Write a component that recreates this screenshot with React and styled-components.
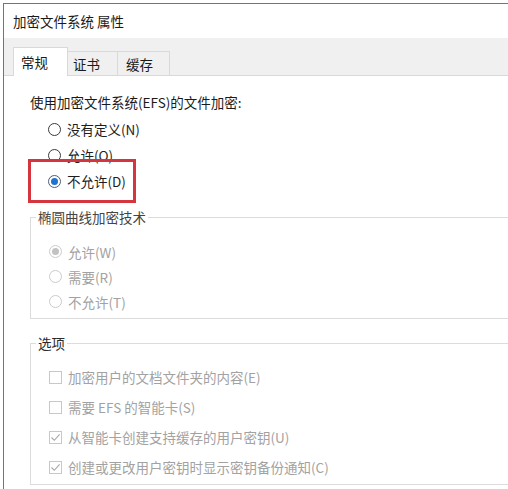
import React from "react";
import styled, { createGlobalStyle } from "styled-components";

const GlobalStyle = createGlobalStyle`
  *, *::before, *::after { box-sizing: border-box; }
  html, body { margin: 0; padding: 0; background: #fff; }
  body {
    font-family: "Noto Sans CJK SC", "Noto Sans", sans-serif;
    font-size: 13.5px;
    color: #1e1e1e;
  }
`;

const Page = styled.div`
  width: 508px;
  height: 489px;
  padding: 3px 0 0 3px;
  overflow: hidden;
  background: #fff;
`;

const Window = styled.div`
  height: 100%;
  display: flex;
  flex-direction: column;
  border-top: 1px solid #747474;
  border-left: 1px solid #747474;
  overflow: hidden;
`;

const TitleBar = styled.div`
  height: 34px;
  display: flex;
  align-items: center;
  padding-left: 9px;
  color: #1a1a1a;
`;

const TabStrip = styled.div`
  height: 38px;
  display: flex;
  align-items: flex-end;
  padding-left: 9px;
  background: #f0f0f0;
  border-bottom: 1px solid #d9d9d9;
`;

const Tab = styled.div`
  width: ${(p) => p.$w}px;
  height: ${(p) => (p.$active ? 29 : 25)}px;
  margin-bottom: -1px;
  display: flex;
  align-items: center;
  padding-left: ${(p) => p.$pad}px;
  background: ${(p) => (p.$active ? "#fff" : "#f0f0f0")};
  border: 1px solid #d9d9d9;
  border-bottom: ${(p) => (p.$active ? "none" : "1px solid #d9d9d9")};
  border-left: ${(p) => (p.$active ? "1px solid #d9d9d9" : "none")};
  color: #1a1a1a;
  position: relative;
  z-index: ${(p) => (p.$active ? 1 : 0)};
`;

const Content = styled.div`
  flex: 1;
  background: #fff;
  padding: 16px 0 0 26px;
`;

const Heading = styled.div`
  height: 20px;
  line-height: 20px;
  color: #1a1a1a;
`;

const OptionList = styled.div`
  display: flex;
  flex-direction: column;
  padding-left: ${(p) => p.$indent}px;
  margin-top: ${(p) => p.$top || 0}px;
`;

const Row = styled.label`
  height: ${(p) => p.$h}px;
  display: flex;
  align-items: center;
  gap: 6px;
  position: relative;
  color: ${(p) => (p.$disabled ? "#a2a2a2" : "#1e1e1e")};
`;

const Radio = styled.span`
  width: 13px;
  height: 13px;
  flex: none;
  border-radius: 50%;
  border: 1px solid
    ${(p) => (p.$disabled ? "#cbcbcb" : p.$checked ? "#4f5d70" : "#3a3a3a")};
  background: #fff;
  display: flex;
  align-items: center;
  justify-content: center;

  &::after {
    content: "";
    width: 7px;
    height: 7px;
    border-radius: 50%;
    display: ${(p) => (p.$checked ? "block" : "none")};
    background: ${(p) => (p.$disabled ? "#c2c2c2" : "#1f72cf")};
  }
`;

const Box = styled.span`
  width: 13px;
  height: 13px;
  flex: none;
  border: 1px solid #c8c8c8;
  background: #fff;
  display: flex;
  align-items: center;
  justify-content: center;
`;

const Highlight = styled.span`
  position: absolute;
  left: -20px;
  top: -9px;
  width: 108px;
  height: 44px;
  border: 3px solid #d5353f;
  pointer-events: none;
`;

const Group = styled.fieldset`
  margin: ${(p) => p.$top}px -60px 0 0;
  padding: ${(p) => p.$pt}px 0 ${(p) => p.$pb}px 5px;
  border: 1px solid #dcdcdc;
  min-width: 0;
`;

const Legend = styled.legend`
  padding: 0 2px;
  height: 20px;
  line-height: 20px;
  color: ${(p) => p.$color};
`;

const Check = () => (
  <svg width="11" height="11" viewBox="0 0 11 11">
    <path d="M1.5 5.5 L4.3 8.3 L9.6 2.4" fill="none" stroke="#a6a6a6" strokeWidth="1.1" />
  </svg>
);

const efsOptions = [
  { label: "没有定义(N)" },
  { label: "允许(O)" },
  { label: "不允许(D)", checked: true, marked: true },
];

const eccOptions = [
  { label: "允许(W)", checked: true },
  { label: "需要(R)" },
  { label: "不允许(T)" },
];

const extraOptions = [
  { label: "加密用户的文档文件夹的内容(E)" },
  { label: "需要 EFS 的智能卡(S)" },
  { label: "从智能卡创建支持缓存的用户密钥(U)", checked: true },
  { label: "创建或更改用户密钥时显示密钥备份通知(C)", checked: true },
];

export default function App() {
  return (
    <>
      <GlobalStyle />
      <Page>
        <Window>
          <TitleBar>加密文件系统 属性</TitleBar>
          <TabStrip>
            <Tab $active $w={55} $pad={7}>常规</Tab>
            <Tab $w={50} $pad={5}>证书</Tab>
            <Tab $w={52} $pad={8}>缓存</Tab>
          </TabStrip>
          <Content>
            <Heading>使用加密文件系统(EFS)的文件加密:</Heading>
            <OptionList $indent={18} $top={4}>
              {efsOptions.map((o) => (
                <Row key={o.label} $h={26}>
                  <Radio $checked={o.checked} />
                  {o.label}
                  {o.marked && <Highlight />}
                </Row>
              ))}
            </OptionList>

            <Group $top={13} $pt={12} $pb={4}>
              <Legend $color="#454545">椭圆曲线加密技术</Legend>
              <OptionList $indent={13}>
                {eccOptions.map((o) => (
                  <Row key={o.label} $h={25} $disabled>
                    <Radio $checked={o.checked} $disabled />
                    {o.label}
                  </Row>
                ))}
              </OptionList>
            </Group>

            <Group $top={14} $pt={9} $pb={2}>
              <Legend $color="#2a2a2a">选项</Legend>
              <OptionList $indent={13}>
                {extraOptions.map((o) => (
                  <Row key={o.label} $h={30} $disabled>
                    <Box>{o.checked && <Check />}</Box>
                    {o.label}
                  </Row>
                ))}
              </OptionList>
            </Group>
          </Content>
        </Window>
      </Page>
    </>
  );
}
